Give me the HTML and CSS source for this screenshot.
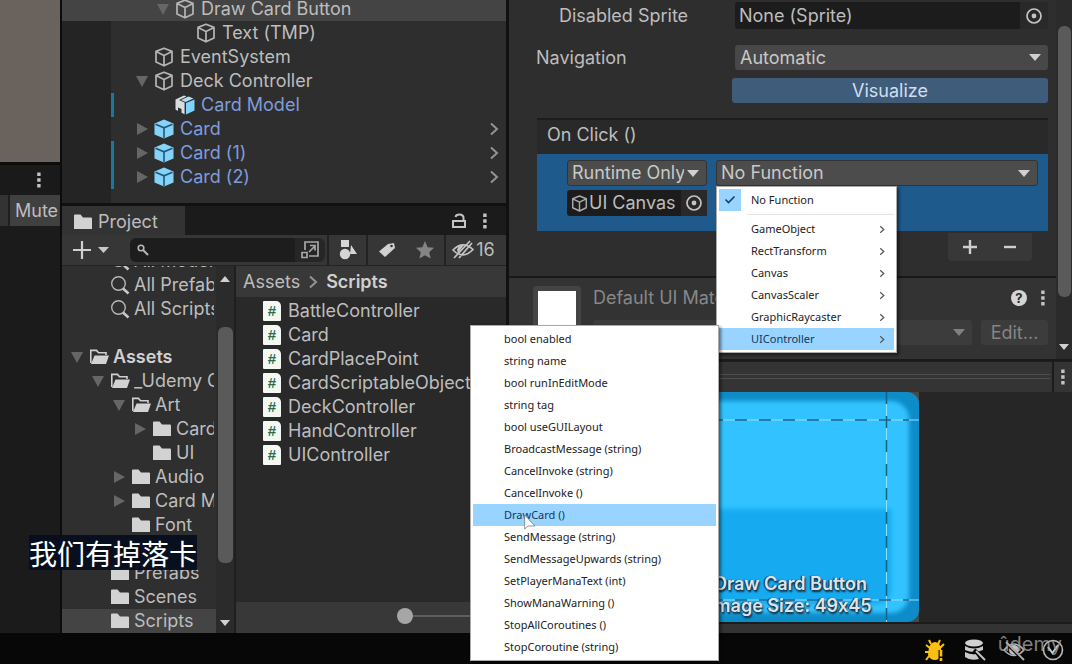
FILE: index.html
```
<!DOCTYPE html>
<html lang="en">
<head>
<meta charset="utf-8">
<title>Unity Editor</title>
<link rel="stylesheet" href="styles.css">
</head>
<body>
<svg class="defs" aria-hidden="true">
  <symbol id="cube" viewBox="0 0 20 20"><path d="M10 1.2 18 4.4V15L10 18.8 2 15V4.4Z M2 4.6 10 8.4 18 4.6 M10 8.4V18.8" fill="none" stroke="currentColor" stroke-width="1.7" stroke-linejoin="round"/></symbol>
  <symbol id="prefab" viewBox="0 0 20 20"><path d="M10 .5 19.5 4.4V15.4L10 19.5.5 15.4V4.4Z" fill="#85d3f8"/><path d="M1.5 5.2 10 8.8 18.5 5.2M10 8.8V19" fill="none" stroke="#22577a" stroke-width="1.6"/></symbol>
  <symbol id="model" viewBox="0 0 20 20"><path d="M11 8 19.5 4.5V15.4L11 19.5Z" fill="#7fd4fb"/><path d="M9 .5 11.5 1.4 4 5 9.6 7.6V19.3L6.500 17.800V14L3 12.500V16L.5 14.500V4.400Z" fill="#d9dcde"/><path d="M6 5 13.500 1.600 18.500 3.600 10.500 7Z" fill="#b5dff2"/></symbol>
  <symbol id="folder" viewBox="0 0 20 20"><path d="M1 3.500Q1 2.500 2 2.500H7.500L10 5.500H18Q19 5.500 19 6.500V17H1Z" fill="#d2d2d2"/></symbol>
  <symbol id="folder-open" viewBox="0 0 20 20"><path d="M1.800 16V3.400H7.500L9.500 5.800H17V8" fill="none" stroke="#d0d0d0" stroke-width="1.600"/><path d="M5.500 8.500H20L17 17H2Z" fill="#d2d2d2"/></symbol>
  <symbol id="search" viewBox="0 0 20 20"><circle cx="8.500" cy="8.500" r="6.800" fill="none" stroke="#b5b5b5" stroke-width="1.400"/><path d="M13 13.500 18.500 18.500" stroke="#c8c8c8" stroke-width="2.600"/></symbol>
  <symbol id="chevron" viewBox="0 0 10 14"><path d="M2 1.500 8 7 2 12.500" fill="none" stroke="currentColor" stroke-width="2"/></symbol>
  <symbol id="dots" viewBox="0 0 6 18"><path d="M1.200 1.500h3.400v3.400H1.200zM1.200 7.300h3.400v3.400H1.200zM1.200 13.100h3.400v3.400H1.200z" fill="#c4c4c4"/></symbol>
  <symbol id="target" viewBox="0 0 18 18"><circle cx="9" cy="9" r="7" fill="none" stroke="#c4c4c4" stroke-width="1.700"/><circle cx="9" cy="9" r="2.400" fill="#c4c4c4"/></symbol>
</svg>

<main class="editor">
  <section class="game">
    <div class="game-view"></div>
    <div class="game-tabs"><button class="plain" aria-label="Game view options"><svg class="i-dots"><use href="#dots"/></svg></button></div>
    <div class="game-tools"><span class="tool-end"></span><button class="mute">Mute</button></div>
    <div class="game-body"></div>
  </section>

  <section class="middle">
    <div class="hierarchy">
      <ul class="rows">
        <li class="row d1 selected"><span class="gutter"></span><span class="tri down"></span><svg class="ico"><use href="#cube"/></svg><span class="name">Draw Card Button</span></li>
        <li class="row d2"><span class="gutter"></span><span class="tri"></span><svg class="ico"><use href="#cube"/></svg><span class="name">Text (TMP)</span></li>
        <li class="row"><span class="gutter"></span><span class="tri"></span><svg class="ico"><use href="#cube"/></svg><span class="name">EventSystem</span></li>
        <li class="row"><span class="gutter"></span><span class="tri down"></span><svg class="ico"><use href="#cube"/></svg><span class="name">Deck Controller</span></li>
        <li class="row d1 blue"><span class="gutter mark"></span><span class="tri"></span><svg class="ico"><use href="#model"/></svg><span class="name">Card Model</span></li>
        <li class="row blue"><span class="gutter"></span><span class="tri right"></span><svg class="ico"><use href="#prefab"/></svg><span class="name">Card</span><svg class="chev"><use href="#chevron"/></svg></li>
        <li class="row blue"><span class="gutter mark"></span><span class="tri right"></span><svg class="ico"><use href="#prefab"/></svg><span class="name">Card (1)</span><svg class="chev"><use href="#chevron"/></svg></li>
        <li class="row blue"><span class="gutter mark"></span><span class="tri right"></span><svg class="ico"><use href="#prefab"/></svg><span class="name">Card (2)</span><svg class="chev"><use href="#chevron"/></svg></li>
        <li class="row rest"><span class="gutter"></span></li>
      </ul>
    </div>

    <div class="project">
      <header class="tabs">
        <button class="tab"><svg class="ico"><use href="#folder"/></svg>Project</button>
        <button class="plain lock" aria-label="Lock"><svg width="16" height="18" viewBox="0 0 16 18"><path d="M2 9H14V15H2ZM12.500 9V6Q12.500 2.500 8.500 2.500 5 2.500 4.500 5" fill="none" stroke="#c4c4c4" stroke-width="2"/></svg></button>
        <button class="plain" aria-label="Project options"><svg class="i-dots"><use href="#dots"/></svg></button>
      </header>
      <div class="toolbar">
        <button class="plain add" aria-label="Create"><svg width="38" height="20" viewBox="0 0 38 20"><path d="M10 1V19M1 10H19" stroke="#d0d0d0" stroke-width="2.200"/><path d="M26 7H37L31.500 13Z" fill="#c8c8c8"/></svg></button>
        <label class="search"><svg width="12" height="12" viewBox="0 0 12 12"><circle cx="4" cy="4" r="2.800" fill="none" stroke="#b8b8b8" stroke-width="1.600"/><path d="M6 6 11 11" stroke="#b8b8b8" stroke-width="2"/></svg><input type="text" aria-label="Search project"></label>
        <button class="plain tool open-search" aria-label="Open in search"><svg width="20" height="20" viewBox="0 0 20 20"><path d="M5 10V2H18V16H9M9 12 15 6M10 5.500H15V10.500" fill="none" stroke="#a8a8a8" stroke-width="1.700"/><path d="M2 12.500H7V17.500H2Z" fill="none" stroke="#a8a8a8" stroke-width="1.700"/></svg></button>
        <button class="plain tool cell" aria-label="Filter by type"><svg width="20" height="20" viewBox="0 0 20 20"><path d="M3 0H11V7H3ZM13 5 19 14H12Z" fill="#d5d5d5"/><circle cx="7" cy="14" r="5.200" fill="#d5d5d5"/></svg></button>
        <button class="plain tool cell" aria-label="Filter by label"><svg width="18" height="18" viewBox="0 0 18 18"><path d="M10 3 16 2 17 7 7 16 1 10.500Z" fill="#d0d0d0"/><circle cx="13.500" cy="5" r="1.300" fill="#383838"/></svg></button>
        <button class="plain tool" aria-label="Favorites"><svg width="20" height="20" viewBox="0 0 20 20"><path d="M10 1 12.600 7.200 19 7.800 14.200 12.200 15.600 18.600 10 15.200 4.400 18.600 5.800 12.200 1 7.800 7.400 7.200Z" fill="#858585"/></svg></button>
        <button class="plain hidden-count"><svg width="24" height="20" viewBox="0 0 24 20"><path d="M2 10Q12 0 22 9.500 12 20 2 10ZM3 18 19 1M8 18 21 3" fill="none" stroke="#c4c4c4" stroke-width="1.700"/><path d="M6 10Q7 5 13 5L7 13Z" fill="#c4c4c4"/></svg>16</button>
      </div>
      <div class="browser">
        <div class="tree">
          <ul class="rows">
            <li class="row t1"><span class="tri"></span><svg class="ico"><use href="#search"/></svg><span class="name">All Models</span></li>
            <li class="row t1"><span class="tri"></span><svg class="ico"><use href="#search"/></svg><span class="name">All Prefabs</span></li>
            <li class="row t1"><span class="tri"></span><svg class="ico"><use href="#search"/></svg><span class="name">All Scripts</span></li>
            <li class="row"></li>
            <li class="row"><span class="tri down"></span><svg class="ico"><use href="#folder-open"/></svg><b class="name">Assets</b></li>
            <li class="row t1"><span class="tri down"></span><svg class="ico"><use href="#folder-open"/></svg><span class="name">_Udemy Course</span></li>
            <li class="row t2"><span class="tri down"></span><svg class="ico"><use href="#folder-open"/></svg><span class="name">Art</span></li>
            <li class="row t3"><span class="tri right"></span><svg class="ico"><use href="#folder"/></svg><span class="name">Cards</span></li>
            <li class="row t3"><span class="tri"></span><svg class="ico"><use href="#folder"/></svg><span class="name">UI</span></li>
            <li class="row t2"><span class="tri right"></span><svg class="ico"><use href="#folder"/></svg><span class="name">Audio</span></li>
            <li class="row t2"><span class="tri right"></span><svg class="ico"><use href="#folder"/></svg><span class="name">Card Model</span></li>
            <li class="row t2"><span class="tri"></span><svg class="ico"><use href="#folder"/></svg><span class="name">Font</span></li>
            <li class="row"></li>
            <li class="row t1"><span class="tri"></span><svg class="ico"><use href="#folder"/></svg><span class="name">Prefabs</span></li>
            <li class="row t1"><span class="tri"></span><svg class="ico"><use href="#folder"/></svg><span class="name">Scenes</span></li>
            <li class="row t1 selected"><span class="tri"></span><svg class="ico"><use href="#folder"/></svg><span class="name">Scripts</span></li>
          </ul>
          <div class="scroll"><span class="arrow up"></span><span class="thumb"></span><span class="arrow"></span></div>
        </div>
        <div class="files">
          <nav class="crumbs"><span>Assets</span><svg class="chev"><use href="#chevron"/></svg><b>Scripts</b></nav>
          <ul class="scripts">
            <li class="row"><span class="cs">#</span>BattleController</li>
            <li class="row"><span class="cs">#</span>Card</li>
            <li class="row"><span class="cs">#</span>CardPlacePoint</li>
            <li class="row"><span class="cs">#</span>CardScriptableObject</li>
            <li class="row"><span class="cs">#</span>DeckController</li>
            <li class="row"><span class="cs">#</span>HandController</li>
            <li class="row"><span class="cs">#</span>UIController</li>
          </ul>
          <footer class="zoom"><input type="range" min="0" max="100" value="0" aria-label="Icon size"></footer>
        </div>
      </div>
    </div>
  </section>

  <section class="side">
    <div class="inspector">
      <div class="props">
        <div class="field first"><label class="sub" for="sprite">Disabled Sprite</label><div class="object"><input id="sprite" type="text" value="None (Sprite)" readonly><button class="plain" aria-label="Pick sprite"><svg class="i-target"><use href="#target"/></svg></button></div></div>
        <div class="field"><label for="nav">Navigation</label><div class="drop"><select id="nav"><option>Automatic</option></select></div></div>
        <button class="visualize">Visualize</button>
        <div class="event">
          <h3>On Click ()</h3>
          <div class="call">
            <div class="target-col">
              <div class="drop"><select aria-label="Call state"><option>Runtime Only</option></select></div>
              <div class="object small"><svg class="ico"><use href="#cube"/></svg><input type="text" value="UI Canvas" aria-label="Target object" readonly><button class="plain" aria-label="Pick object"><svg class="i-target"><use href="#target"/></svg></button></div>
            </div>
            <div class="drop fn"><select aria-label="Function"><option>No Function</option></select></div>
          </div>
          <div class="list-buttons"><button class="plain" aria-label="Add"><svg width="16" height="16" viewBox="0 0 16 16"><path d="M8 1V15M1 8H15" stroke="#cfcfcf" stroke-width="2.400"/></svg></button><button class="plain" aria-label="Remove"><svg width="16" height="16" viewBox="0 0 16 16"><path d="M2 8H14" stroke="#cfcfcf" stroke-width="2.400"/></svg></button></div>
        </div>
        <div class="material">
          <div class="swatch"></div>
          <div class="mat-info">
            <div class="mat-head"><span class="mat-name">Default UI Material</span><button class="plain help" aria-label="Help">?</button><button class="plain" aria-label="Material options"><svg class="i-dots"><use href="#dots"/></svg></button></div>
            <div class="mat-row"><div class="drop off"><select aria-label="Shader" disabled><option></option></select></div><button class="edit" disabled>Edit...</button></div>
          </div>
        </div>
      </div>
      <div class="scroll wide"><span class="thumb"></span><span class="arrow"></span></div>
    </div>
    <header class="preview-head"><span class="grip"></span><button class="plain" aria-label="Preview options"><svg class="i-dots"><use href="#dots"/></svg></button></header>
    <figure class="preview">
      <svg class="sprite" viewBox="0 0 256 230" preserveAspectRatio="none">
        <defs><filter id="soft" x="-5%" y="-5%" width="110%" height="110%"><feGaussianBlur stdDeviation="2"/></filter></defs>
        <rect width="256" height="230" fill="#4a4845"/>
        <rect width="256" height="230" rx="12" fill="#0d8cc8"/>
        <rect x="10" y="9" width="236" height="212" rx="18" fill="#30c2ff" filter="url(#soft)"/>
        <path d="M32 117H228V200Q226 212 212 212H44Q32 212 32 200Z" fill="#18abf0" filter="url(#soft)"/>
        <path d="M0 28H256M0 208H256M31.500 0V230M223.500 0V230" fill="none" stroke="#8fe0ff"/>
        <path d="M0 28H246M0 208H246M31.500 0V230M223.500 0V230" fill="none" stroke="#14618a" stroke-width="1.500" stroke-dasharray="12 12"/>
      </svg>
      <figcaption>Draw Card Button<br>Image Size: 49x45</figcaption>
    </figure>
    <div class="strip"></div>
  </section>
</main>

<footer class="status">
  <svg width="20" height="24" viewBox="0 0 20 24"><path d="M6 6Q10 2 14 6L16 9V17Q14 22 10 22 5 22 3 17L4 9Z" fill="#fdc010"/><path d="M6 6 4 2M13 6 15 2M5 10 1 7M15 10 19 6M4 14H0M4 18 1 22" stroke="#fdc010" stroke-width="2"/><path d="M16 12V24" stroke="#0a0a0a" stroke-width="5"/><path d="M16 12V18.500M16 20V23" stroke="#fdc010" stroke-width="2.600"/></svg>
  <svg width="22" height="22" viewBox="0 0 22 22"><ellipse cx="10" cy="4" rx="9" ry="3.500" fill="#d0d0d0"/><path d="M1 7Q10 12 19 7V11Q10 15 1 11ZM1 13Q7 16 12 15L15 20Q6 22 1 18Z" fill="#c8c8c8"/><path d="M10 11 21 21" stroke="#0a0a0a" stroke-width="4"/><path d="M12 12 21 21" stroke="#c8c8c8" stroke-width="1.800"/></svg>
  <svg width="22" height="22" viewBox="0 0 22 22"><path d="M1 11Q11-1 21 11 11 22 1 11Z" fill="none" stroke="#b0b0b0" stroke-width="1.600"/><circle cx="11" cy="11" r="5" fill="#c0c0c0"/><path d="M2 3 20 21" stroke="#0a0a0a" stroke-width="3"/><path d="M3 3 21 21" stroke="#b0b0b0" stroke-width="1.800"/></svg>
  <svg width="22" height="22" viewBox="0 0 22 22"><circle cx="11" cy="11" r="9.500" fill="none" stroke="#b8b8b8" stroke-width="1.600"/><path d="M6 8 10.500 14 16 6" fill="none" stroke="#c8c8c8" stroke-width="2"/></svg>
  <span class="brand">ûdemy</span>
</footer>

<div class="menu functions" role="menu">
  <button role="menuitem"><span class="check"><svg width="12" height="10" viewBox="0 0 12 10"><path d="M1.500 4.500 4.500 7.500 10.500 1.500" fill="none" stroke="#1b3f66" stroke-width="1.600"/></svg></span>No Function</button>
  <hr>
  <button role="menuitem">GameObject<svg class="more"><use href="#chevron"/></svg></button>
  <button role="menuitem">RectTransform<svg class="more"><use href="#chevron"/></svg></button>
  <button role="menuitem">Canvas<svg class="more"><use href="#chevron"/></svg></button>
  <button role="menuitem">CanvasScaler<svg class="more"><use href="#chevron"/></svg></button>
  <button role="menuitem">GraphicRaycaster<svg class="more"><use href="#chevron"/></svg></button>
  <button role="menuitem" class="active">UIController<svg class="more"><use href="#chevron"/></svg></button>
</div>
<div class="menu methods" role="menu">
  <button role="menuitem">bool enabled</button>
  <button role="menuitem">string name</button>
  <button role="menuitem">bool runInEditMode</button>
  <button role="menuitem">string tag</button>
  <button role="menuitem">bool useGUILayout</button>
  <button role="menuitem">BroadcastMessage (string)</button>
  <button role="menuitem">CancelInvoke (string)</button>
  <button role="menuitem">CancelInvoke ()</button>
  <button role="menuitem" class="active">DrawCard ()</button>
  <button role="menuitem">SendMessage (string)</button>
  <button role="menuitem">SendMessageUpwards (string)</button>
  <button role="menuitem">SetPlayerManaText (int)</button>
  <button role="menuitem">ShowManaWarning ()</button>
  <button role="menuitem">StopAllCoroutines ()</button>
  <button role="menuitem">StopCoroutine (string)</button>
</div>
<svg class="cursor" viewBox="0 0 12 18"><path d="M.7 1V15L4 12H11Z" fill="#fff" stroke="#777" stroke-width=".8"/></svg>
<p class="subtitle" lang="zh">我们有掉落卡</p>
</body>
</html>
```
FILE: styles.css
```
* { box-sizing: border-box; }
body {
  margin: 0;
  height: 100vh;
  display: flex;
  flex-direction: column;
  overflow: hidden;
  position: relative;
  background: #070707;
  color: #bdbdbd;
  font: 18px/24px Inter, "Liberation Sans", sans-serif;
  font-optical-sizing: none;
  font-feature-settings: "calt" 0;
}
button, input, select { font: inherit; font-optical-sizing: none; color: inherit; margin: 0; border: 0; }
ul, h3, figure, p { margin: 0; padding: 0; list-style: none; font-size: 18px; font-weight: 400; }
svg { display: block; flex: none; }
.defs { position: absolute; width: 0; height: 0; }
.plain { background: none; padding: 0; display: flex; align-items: center; justify-content: center; }
.i-dots { width: 6px; height: 18px; }
.i-target { width: 18px; height: 18px; }
.ico { width: 20px; height: 20px; }
.chev { width: 10px; height: 14px; color: #949494; }

.editor { flex: 1; min-height: 0; display: flex; }

/* Game view */
.game { width: 62px; flex: none; display: flex; flex-direction: column; border-right: 2px solid #0c0c0c; }
.game-view { height: 165px; background: #6a625c; border-bottom: 3px solid #0c0c0c; }
.game-tabs { height: 30px; background: #1a1a1a; display: flex; justify-content: flex-end; padding-right: 18px; }
.game-tools { height: 31px; background: #1f1f1f; display: flex; gap: 2px; }
.tool-end { width: 8px; background: #333; }
.mute { flex: 1; min-width: 0; overflow: hidden; padding: 0 0 0 5px; background: #404040; text-align: left; }
.game-body { flex: 1; background: #1b1b1b; }

/* Hierarchy */
.middle { width: 447px; flex: none; display: flex; flex-direction: column; border-right: 3px solid #111; }
.hierarchy { height: 206px; overflow: hidden; background: #2e2e2e; border-bottom: 3px solid #111; }
.hierarchy .rows { margin-top: -3px; }
.row { height: 24px; display: flex; align-items: center; white-space: nowrap; }
.row .name { margin-left: 6px; }
.hierarchy .ico { margin-left: 2px; color: #b5b5b5; }
.gutter { align-self: stretch; width: 52px; flex: none; margin-right: 18px; border-right: 3px solid transparent; background: #242424; background-clip: padding-box; }
.d1 .gutter { margin-right: 39px; }
.d2 .gutter { margin-right: 60px; }
.gutter.mark { border-right-color: #1879a0; }
.selected { background: #444; }
.selected .gutter { background: none; }
.rest { height: 17px; }
.blue .name { color: #7e9cdb; }
.row .chev { margin-left: auto; margin-right: 7px; }
.tri { width: 20px; flex: none; display: flex; justify-content: center; }
.tri.down::before { content: ""; border: 6px solid transparent; border-top: 11px solid #666; border-bottom: 0; }
.tri.right::before { content: ""; border: 6px solid transparent; border-left: 11px solid #666; border-right: 0; }

/* Project */
.project { flex: 1; min-height: 0; display: flex; flex-direction: column; background: #333; }
.tabs { height: 29px; flex: none; background: #1b1b1b; display: flex; padding-right: 18px; gap: 15px; }
.tab { width: 123px; margin-right: auto; padding: 2px 0 0 11px; background: #333; display: flex; align-items: center; gap: 5px; }
.toolbar { height: 31px; flex: none; display: flex; align-items: center; background: #363636; border-bottom: 1px solid #232323; }
.add { width: 68px; justify-content: flex-start; padding-left: 10px; }
.search { flex: 1; min-width: 0; height: 24px; display: flex; align-items: center; padding-left: 7px; background: #1d1d1d; border-radius: 6px 0 0 6px; }
.search input { flex: 1; min-width: 0; background: none; outline: 0; }
.tool { width: 39px; align-self: stretch; }
.open-search { width: 30px; height: 24px; align-self: center; background: #262626; border-radius: 0 6px 6px 0; margin-right: 2px; }
.cell { border-left: 2px solid #222; }
.hidden-count { width: 62px; align-self: stretch; border-left: 2px solid #222; gap: 1px; padding-right: 6px; }
.browser { flex: 1; min-height: 0; display: flex; }
.tree { width: 174px; flex: none; display: flex; overflow: hidden; background: #2f2f2f; border-right: 2px solid #1f1f1f; }
.tree .rows { flex: 1; min-width: 0; margin-top: -17px; }
.tree .row { padding-left: 5px; overflow: hidden; }
.tree .row .ico { margin-left: 2px; }
.tree .row .name { margin-left: 4px; margin-right: 2px; overflow: hidden; }
.tree .t1 { padding-left: 26px; }
.tree .t2 { padding-left: 47px; }
.tree .t3 { padding-left: 68px; }
b { color: #d0d0d0; font-weight: 600; }
.scroll { width: 18px; flex: none; display: flex; flex-direction: column; align-items: center; justify-content: space-between; background: #2b2b2b; padding: 10px 0 7px; }
.arrow { border: 5px solid transparent; border-top: 6px solid #d0d0d0; border-bottom: 0; }
.arrow.up { border: 5px solid transparent; border-bottom: 6px solid #d0d0d0; border-top: 0; }
.scroll .thumb { width: 15px; height: 236px; margin-bottom: 12px; background: #5a5a5a; border-radius: 6px; }
.files { flex: 1; min-width: 0; display: flex; flex-direction: column; background: #292929; overflow: hidden; }
.crumbs { height: 31px; flex: none; display: flex; align-items: center; gap: 8px; padding-left: 7px; background: #383838; }
.scripts { flex: 1; padding: 2px 0 0 27px; }
.cs { width: 18px; height: 20px; margin-right: 7px; background: #f3f8f5; color: #287048; font: 700 15px/20px "Liberation Sans", sans-serif; text-align: center; border-radius: 1px 5px 1px 1px; }
.zoom { height: 31px; flex: none; display: flex; justify-content: flex-end; align-items: center; background: #383838; padding: 0 8px 4px 0; }
.zoom input { width: 101px; height: 16px; background: linear-gradient(#5e5e5e, #5e5e5e) center / 100% 2px no-repeat; appearance: none; }
.zoom input::-webkit-slider-thumb { appearance: none; width: 16px; height: 16px; border-radius: 50%; background: #a6a6a6; }

/* Inspector */
.side { flex: 1; min-width: 0; display: flex; flex-direction: column; background: #2e2e2e; }
.inspector { height: 361px; flex: none; display: flex; border-bottom: 2px solid #1a1a1a; }
.props { flex: 1; min-width: 0; }
.field { display: flex; align-items: center; margin: 16px 8px 0 27px; }
.field.first { margin-top: 2px; }
.field label { width: 199px; flex: none; }
.field .sub { padding-left: 23px; }
.object { flex: 1; min-width: 0; height: 27px; display: flex; align-items: center; background: #1c1c1c; border-radius: 3px; }
.object input { flex: 1; min-width: 0; padding: 0 0 0 4px; background: none; outline: 0; }
.object .plain { width: 28px; align-self: stretch; background: #292929; }
.drop { position: relative; flex: 1; min-width: 0; height: 25px; background: #484848; border-radius: 3px; }
.drop::after { content: ""; position: absolute; right: 7px; top: 9px; border: 6px solid transparent; border-top: 7px solid #d0d0d0; border-bottom: 0; }
.drop select { appearance: none; width: 100%; height: 100%; padding: 0 22px 0 5px; background: none; outline: 0; color: #c8c8c8; }
.visualize { display: block; width: calc(100% - 231px); height: 25px; margin: 8px 8px 0 223px; padding: 0; background: #405c7b; border-radius: 3px; color: #d0deee; }
.event { margin: 15px 8px 0 28px; }
.event h3 { height: 36px; padding: 3px 0 0 10px; background: #292929; border-top: 2px solid #1d1d1d; }
.call { height: 77px; display: flex; gap: 9px; padding: 6px 10px 0 30px; background: #1f5a8d; }
.target-col { width: 140px; flex: none; display: flex; flex-direction: column; gap: 4px; }
.call .drop { flex: none; height: 26px; background: #4c4c4c; border: 1px solid #333; }
.call .drop select { padding-left: 4px; }
.call .fn { flex: 1; }
.small { flex: none; height: 26px; padding-left: 4px; }
.small .ico { width: 17px; height: 17px; color: #aaa; }
.small input { padding-left: 1px; }
.small .plain { width: 26px; }
.list-buttons { width: 84px; height: 28px; margin: 2px 16px 0 auto; padding: 0 2px; display: flex; background: #383838; border-radius: 0 0 4px 4px; }
.list-buttons .plain { flex: 1; }
.material { height: 83px; margin-top: 15px; display: flex; border-top: 2px solid #181818; background: #333; padding: 8px 8px 0 24px; }
.swatch { width: 48px; height: 50px; border: 5px solid #444; background: #fff; border-radius: 4px; }
.mat-info { flex: 1; min-width: 0; padding-left: 12px; }
.mat-head { height: 24px; display: flex; align-items: center; gap: 13px; padding-right: 2px; }
.mat-name { flex: 1; color: #888; white-space: nowrap; }
.help { width: 16px; height: 16px; border-radius: 50%; background: #d5d5d5; color: #2a2a2a; font: 700 13px/16px Inter, sans-serif; }
.mat-row { display: flex; gap: 9px; margin-top: 10px; }
.off { background: #3c3c3c; }
.off::after { border-top-color: #808080; }
.edit { width: 67px; height: 25px; padding: 0; background: #3c3c3c; border-radius: 3px; color: #858585; }
.scroll.wide { width: 16px; padding: 26px 0 9px; }
.scroll.wide .thumb { width: 13px; height: 271px; margin-bottom: 0; }
.preview-head { height: 31px; flex: none; display: flex; background: #343434; border-top: 1px solid #1e1e1e; }
.preview-head .plain { width: 20px; border-left: 2px solid #1c1c1c; }
.grip { flex: 1; height: 5px; margin-top: 12px; margin-right: 2px; border: solid #4e4e4e; border-width: 1px 0; }
.preview { flex: 1; min-height: 0; display: grid; justify-items: center; align-items: end; background: #262626; }
.preview > * { grid-area: 1 / 1; }
.sprite { width: 256px; height: 100%; }
figcaption { padding-bottom: 5px; color: #dce4ea; font-weight: 600; line-height: 22px; text-align: center; text-shadow: 1px 2px 2px #12242f, -1px 0 1px #12242f; }
.strip { height: 11px; flex: none; background: #333; border-top: 2px solid #1c1c1c; }

/* Status bar */
.status { height: 31px; flex: none; display: flex; align-items: center; justify-content: flex-end; gap: 17px; padding: 2px 8px 0 0; position: relative; background: #070707; }
.status svg:first-child { margin-right: 2px; }
.brand { position: absolute; right: 10px; top: -1px; color: rgba(170, 170, 170, .75); font-size: 20px; }

/* Popup menus */
.menu { position: absolute; padding: 2px; background: #fff; border: 1px solid #ababab; box-shadow: 2px 2px 3px rgba(0, 0, 0, .5); color: #222; font: 11px/22px "Noto Sans", "Open Sans", sans-serif; }
.menu button { width: 100%; height: 22px; padding: 0 0 0 32px; display: flex; align-items: center; background: none; text-align: left; white-space: nowrap; position: relative; }
.menu .active { background: #99d3ff; color: #10385c; }
.menu hr { height: 1px; margin: 3px 0 3px 28px; border: 0; background: #e4e4e4; }
.functions { left: 716px; top: 186px; width: 181px; }
.methods { left: 470px; top: 325px; width: 249px; }
.methods button { padding-left: 31px; }
.check { position: absolute; left: 0; top: 0; width: 22px; height: 22px; display: flex; align-items: center; justify-content: center; background: #99d3ff; }
.more { width: 6px; height: 9px; margin-left: auto; margin-right: 9px; color: #555; }
.cursor { position: absolute; left: 524px; top: 514px; width: 12px; height: 18px; }
.subtitle { position: absolute; left: 29px; top: 535px; height: 35px; background: rgba(6, 15, 30, .96); color: #fff; font: 28px/37px "Noto Sans CJK SC", sans-serif; white-space: nowrap; }
```
